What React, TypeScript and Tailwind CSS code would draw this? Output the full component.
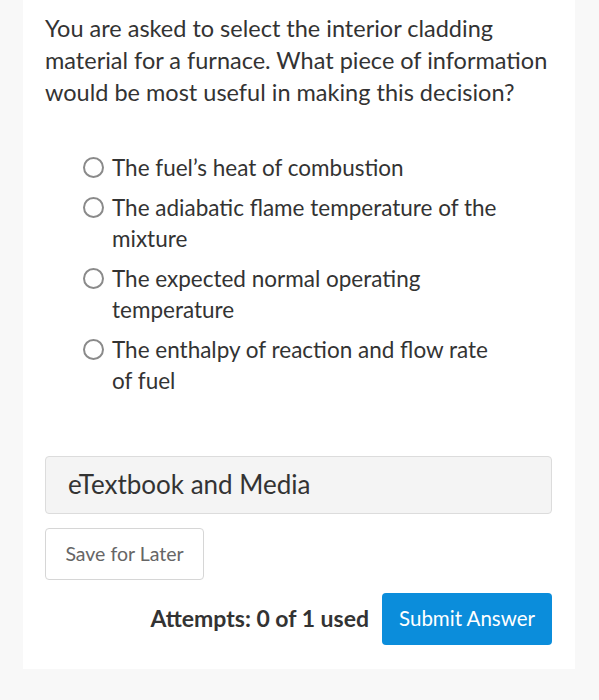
import React from "react";

const options = [
  "The fuel’s heat of combustion",
  "The adiabatic flame temperature of the mixture",
  "The expected normal operating temperature",
  "The enthalpy of reaction and flow rate of fuel",
];

export default function App() {
  return (
    <div
      className="min-h-[700px] w-[599px] bg-[#f8f8f8] pl-[23px] pr-[24px]"
      style={{ fontFamily: "Lato, 'Open Sans', sans-serif" }}
    >
      <div className="bg-white pl-[22px] pr-[23px] pt-[12px] pb-[24px] h-[669px]">
        <p className="text-[23.5px] leading-[32px] text-[#333] w-[505px]">
          You are asked to select the interior cladding material for a furnace. What piece of information
          would be most useful in making this decision?
        </p>

        <div className="mt-[44px] ml-[38px] flex flex-col gap-[8px]">
          {options.map((o) => (
            <label key={o} className="flex items-start gap-[8px]">
              <span className="mt-[5px] h-[21px] w-[21px] shrink-0 rounded-full border-2 border-[#8a8a8a] bg-white" />
              <span className="w-[395px] text-[22.5px] leading-[31.5px] text-[#333]">{o}</span>
            </label>
          ))}
        </div>

        <div className="mt-[59px] flex h-[58px] items-center rounded border border-[#dcdcdc] bg-[#f4f4f4] pl-[22px] text-[26px] text-[#333]">
          eTextbook and Media
        </div>

        <button className="mt-[14px] h-[52px] w-[159px] rounded border border-[#d6d6d6] bg-white text-[19.5px] text-[#666]">
          Save for Later
        </button>

        <div className="mt-[13px] flex items-center justify-end gap-[13px]">
          <span className="text-[23px] font-bold text-[#333]">Attempts: 0 of 1 used</span>
          <button className="h-[52px] w-[170px] rounded bg-[#0b8ddb] text-[20.5px] text-white">
            Submit Answer
          </button>
        </div>
      </div>
    </div>
  );
}
